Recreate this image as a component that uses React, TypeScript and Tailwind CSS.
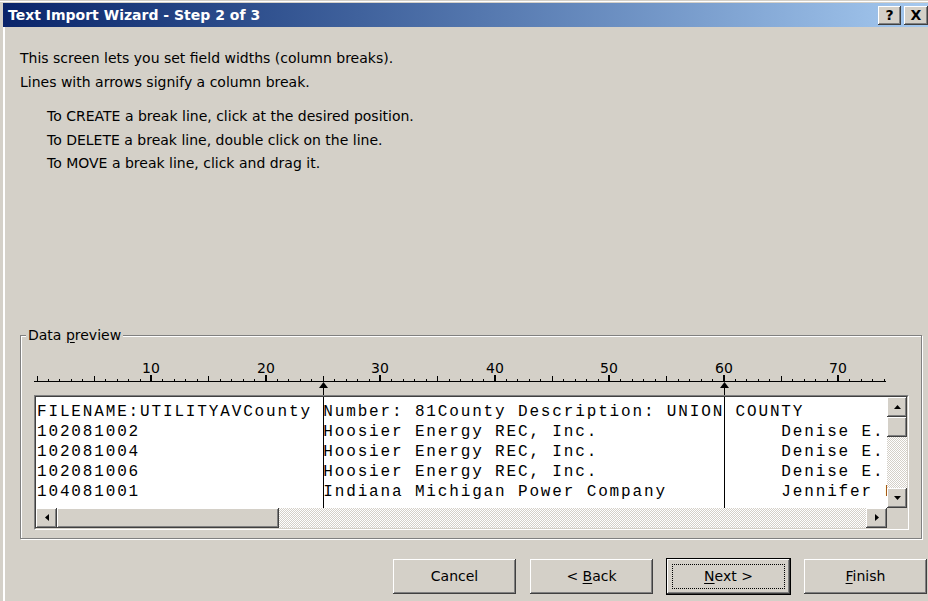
import React from "react";

// classic 3D bevels
const raised =
  "bg-[#d4d0c8] shadow-[inset_-1px_-1px_0_#404040,inset_1px_1px_0_#ffffff,inset_-2px_-2px_0_#808080,inset_2px_2px_0_#d4d0c8]";
const checker =
  "bg-[image:repeating-conic-gradient(#ffffff_0%_25%,#d4d0c8_0%_50%)] bg-[length:2px_2px]";

const CH = 11.45; // width of one preview column
const breaks = [25, 60];

const rows: [string, string, string][] = [
  ["FILENAME:UTILITYAVCounty", "Number: 81County Description: UNION", " COUNTY"],
  ["102081002", "Hoosier Energy REC, Inc.", "     Denise E."],
  ["102081004", "Hoosier Energy REC, Inc.", "     Denise E."],
  ["102081006", "Hoosier Energy REC, Inc.", "     Denise E."],
  ["104081001", "Indiana Michigan Power Company", "     Jennifer L"],
];

const Ruler = () => {
  const marks: React.ReactNode[] = [];
  for (let p = 0; p <= 74; p++) {
    const x = Math.round(2.5 + p * CH);
    if (p % 10 === 0 && p > 0) {
      marks.push(<rect key={"t" + p} x={x - 1} y={20} width={2} height={6} fill="#000" />);
      marks.push(
        <text key={"n" + p} x={x} y={18} textAnchor="middle" fontSize="14" fill="#000">
          {p}
        </text>
      );
    } else if (p % 5 === 0) {
      marks.push(<rect key={"t" + p} x={x} y={21} width={1} height={5} fill="#000" />);
    } else {
      marks.push(<rect key={"t" + p} x={x} y={24} width={1} height={2} fill="#000" />);
    }
  }
  return (
    <svg width="853" height="40" className="block" shapeRendering="crispEdges">
      <rect x={0} y={26} width={852} height={1} fill="#000" />
      {marks}
      {breaks.map((b) => {
        const x = Math.round(2.5 + b * CH);
        return (
          <g key={b}>
            <polygon points={`${x - 4},33 ${x + 0.5},27 ${x + 5},33`} fill="#000" shapeRendering="auto" />
            <rect x={x} y={33} width={1} height={7} fill="#000" />
          </g>
        );
      })}
    </svg>
  );
};

const Arrow = ({ dir }: { dir: "up" | "down" | "left" | "right" }) => {
  const pts = {
    up: "0,4 3.5,0 7,4",
    down: "0,0 3.5,4 7,0",
    left: "4,0 0,3.5 4,7",
    right: "0,0 4,3.5 0,7",
  }[dir];
  const vertical = dir === "up" || dir === "down";
  return (
    <svg width={vertical ? 7 : 4} height={vertical ? 4 : 7}>
      <polygon points={pts} fill="#000" />
    </svg>
  );
};

const WinButton = ({
  label,
  hot,
  isDefault,
}: {
  label: [string, string, string];
  hot?: boolean;
  isDefault?: boolean;
}) => (
  <div
    className={
      "relative w-[123px] h-[35px] flex items-center justify-center text-[14px] text-black " +
      raised +
      (isDefault ? " outline outline-1 outline-black" : "")
    }
  >
    <span>
      {label[0]}
      {hot ? <u className="underline-offset-2">{label[1]}</u> : label[1]}
      {label[2]}
    </span>
    {isDefault && <span className="absolute inset-[5px] border border-dotted border-black" />}
  </div>
);

export default function App() {
  return (
    <div className="w-[928px] h-[601px] overflow-hidden bg-[#d4d0c8] pt-[3px] pl-[3px] font-['DejaVu_Sans',sans-serif] text-black shadow-[inset_0_1px_0_#d4d0c8,inset_0_2px_0_#ffffff]">
      {/* title bar */}
      <div className="h-[24px] w-[930px] flex items-center justify-between bg-linear-to-r from-[#0a246a] to-[#a6caf0] pl-[5px]">
        <span className="text-white font-bold text-[14px]">Text Import Wizard - Step 2 of 3</span>
        <div className="flex gap-[3px] mr-[5px]">
          <div className={"w-[23px] h-[19px] flex items-center justify-center text-[14px] font-bold " + raised}>?</div>
          <div className={"w-[24px] h-[19px] flex items-center justify-center text-[14px] font-bold " + raised}>X</div>
        </div>
      </div>

      <div className="h-[574px] border-l-2 border-white">
        {/* instructions */}
        <div className="pl-[15px] pt-[19px] text-[14px]">
          <div className="leading-[24px]">
            <div>This screen lets you set field widths (column breaks).</div>
            <div>Lines with arrows signify a column break.</div>
          </div>
          <div className="mt-[11px] pl-[27px] leading-[23.5px]">
            <div>To CREATE a break line, click at the desired position.</div>
            <div>To DELETE a break line, double click on the line.</div>
            <div>To MOVE a break line, click and drag it.</div>
          </div>
        </div>

        {/* data preview group */}
        <div className="relative mt-[159px] ml-[15px] mr-[6px] h-[204px] border border-[#808080] shadow-[1px_1px_0_#ffffff,inset_1px_1px_0_#ffffff] pl-[13px] pt-[19px]">
          <span className="absolute left-[5px] top-[-10px] bg-[#d4d0c8] px-[2px] text-[14px] leading-[18px]">
            Data <u className="underline-offset-2">p</u>review
          </span>
          <Ruler />
          <div className="w-[875px] h-[135px] border border-t-[#808080] border-l-[#808080] border-r-white border-b-white">
            <div className="w-full h-full border border-t-[#404040] border-l-[#404040] border-r-[#d4d0c8] border-b-[#d4d0c8] grid grid-cols-[1fr_20px] grid-rows-[111px_20px]">
              <div className="relative bg-white overflow-hidden pt-[5px] pl-[1px] font-['Liberation_Mono',monospace] text-[16px] leading-[20px] tracking-[1.85px] whitespace-pre antialiased">
                {rows.map((r, i) => (
                  <div key={i}>{r[0].padEnd(25) + r[1].padEnd(35) + r[2]}</div>
                ))}
                {breaks.map((b) => (
                  <div
                    key={b}
                    className={"absolute top-0 bottom-0 w-px bg-black " + (b === 25 ? "left-[287px]" : "left-[688px]")}
                  />
                ))}
              </div>
              {/* vertical scrollbar */}
              <div className="flex flex-col">
                <div className={"h-[20px] flex items-center justify-center " + raised}>
                  <Arrow dir="up" />
                </div>
                <div className={"h-[20px] " + raised} />
                <div className={"flex-1 " + checker} />
                <div className={"h-[20px] flex items-center justify-center " + raised}>
                  <Arrow dir="down" />
                </div>
              </div>
              {/* horizontal scrollbar */}
              <div className="flex">
                <div className={"w-[21px] flex items-center justify-center " + raised}>
                  <Arrow dir="left" />
                </div>
                <div className={"w-[222px] " + raised} />
                <div className={"flex-1 " + checker} />
                <div className={"w-[21px] flex items-center justify-center " + raised}>
                  <Arrow dir="right" />
                </div>
              </div>
              <div className="bg-[#d4d0c8]" />
            </div>
          </div>
        </div>

        {/* buttons */}
        <div className="mt-[20px] ml-[388px] flex gap-[14px]">
          <WinButton label={["Cancel", "", ""]} />
          <WinButton label={["< ", "B", "ack"]} hot />
          <WinButton label={["", "N", "ext >"]} hot isDefault />
          <WinButton label={["", "F", "inish"]} hot />
        </div>
      </div>
    </div>
  );
}
